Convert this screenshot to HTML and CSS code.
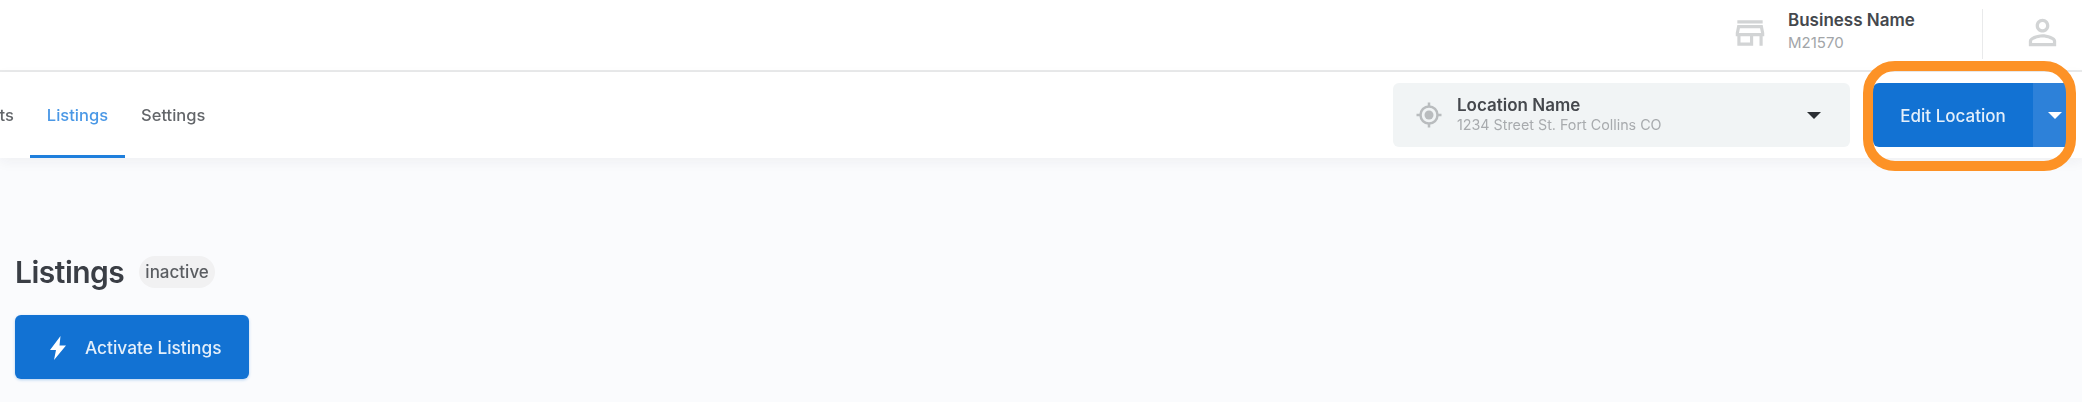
FILE: index.html
```html
<!DOCTYPE html>
<html lang="en">
<head>
<meta charset="utf-8">
<title>Listings</title>
<link rel="stylesheet" href="styles.css">
</head>
<body>
<div class="page">
  <header class="topbar">
    <svg class="store-icon" viewBox="0 0 24 24" width="38" height="38"><path d="M18.360 9l.6 3H5.040l.6-3h12.720M20 4H4v2h16V4zm0 3H4l-1 5v2h1v6h10v-6h4v6h2v-6h1v-2l-1-5zM6 18v-4h6v4H6z"/></svg>
    <div class="business">
      <div class="business-name">Business Name</div>
      <div class="business-id">M21570</div>
    </div>
    <div class="divider"></div>
    <svg class="user-icon" viewBox="0 0 24 24" width="41" height="41"><path d="M12 5.900c1.160 0 2.100.94 2.100 2.100s-.94 2.100-2.100 2.100S9.900 9.160 9.900 8s.94-2.100 2.100-2.100m0 9c2.970 0 6.100 1.460 6.100 2.100v1.100H5.900V17c0-.64 3.130-2.100 6.100-2.100M12 4C9.790 4 8 5.790 8 8s1.790 4 4 4 4-1.790 4-4-1.790-4-4-4zm0 9c-2.670 0-8 1.340-8 4v3h16v-3c0-2.660-5.330-4-8-4z"/></svg>
  </header>
  <nav class="navbar">
    <div class="tabs">
      <a class="tab tab-first">Reports</a>
      <a class="tab active">Listings</a>
      <a class="tab">Settings</a>
    </div>
    <div class="location">
      <svg class="loc-icon" viewBox="0 0 28 28" width="28" height="28"><circle class="ring" cx="14" cy="14" r="8.500"/><circle class="dot" cx="14" cy="14" r="4.500"/><path class="ring" d="M14 1.500v4M14 22.500v4M1.500 14h4M22.500 14h4"/></svg>
      <div class="loc-text">
        <div class="loc-name">Location Name</div>
        <div class="loc-addr">1234 Street St. Fort Collins CO</div>
      </div>
      <span class="caret dark"></span>
    </div>
    <div class="split-btn">
      <span class="split-main">Edit Location</span>
      <span class="split-side"><span class="caret"></span></span>
    </div>
    <div class="highlight"></div>
  </nav>
  <main class="content">
    <div class="title-row">
      <h1 class="title">Listings</h1>
      <span class="badge">inactive</span>
    </div>
    <button class="activate">
      <svg viewBox="0 0 16 24" width="16" height="24"><path d="M10.500 0 0 14h6l-2 10L16 9.500H9.500z"/></svg>
      <span>Activate Listings</span>
    </button>
  </main>
</div>
</body>
</html>
```
FILE: styles.css
```css
* { box-sizing: border-box; }
html, body { margin: 0; padding: 0; background: #fafbfd; }
body { font-family: Inter, "Liberation Sans", sans-serif; width: 2082px; height: 402px; overflow: hidden; }
.page { filter: blur(0.6px); height: 402px; }

.topbar { height: 72px; background: #fff; border-bottom: 2px solid #e9eaeb; display: flex; align-items: center; padding-right: 19px; justify-content: flex-end; }
.store-icon { fill: #d2d4d5; margin-right: 19px; margin-top: -4px; }
.business { width: 194px; display: flex; flex-direction: column; gap: 4px; margin-top: -8px; }
.business-name { font-size: 17px; font-weight: 600; color: #45484d; line-height: 20px; }
.business-id { font-size: 15px; color: #a2a5a8; line-height: 18px; }
.divider { width: 1px; height: 50px; background: #e9eaeb; margin-top: -2px; margin-right: 39px; }
.user-icon { fill: #d2d4d5; margin-top: -5px; }

.navbar { position: relative; height: 86px; background: #fff; display: flex; align-items: center; box-shadow: 0 4px 12px rgba(30, 40, 60, 0.05); }
.tabs { display: flex; height: 100%; margin-left: -64px; margin-right: auto; }
.tab { font-size: 16.500px; font-weight: 500; color: #63666a; display: flex; align-items: center; padding: 2px 16.500px 0; border-bottom: 3px solid transparent; }
.tab.active { color: #4a98e6; border-bottom-color: #1f7fdc; }

.location { width: 457px; height: 64px; background: #f1f4f5; border-radius: 6px; display: flex; align-items: center; padding: 0 29px 0 22px; margin-right: 23px; }
.loc-icon { margin-right: 14px; }
.loc-icon .ring { fill: none; stroke: #b9bcbe; stroke-width: 2.500; }
.loc-icon .dot { fill: #b9bcbe; }
.loc-text { flex: 1; }
.loc-name { font-size: 17px; font-weight: 600; color: #45484d; line-height: 20px; }
.loc-addr { font-size: 14.300px; color: #a8abae; line-height: 20px; }

.caret { display: block; width: 0; height: 0; border-left: 7px solid transparent; border-right: 7px solid transparent; border-top: 7px solid #fff; }
.caret.dark { border-top-color: #2b2e33; }

.split-btn { width: 194px; height: 64px; margin-right: 15px; display: flex; border-radius: 6px 0 0 6px; overflow: hidden; background: #1272d3; }
.split-main { flex: 1; display: flex; align-items: center; justify-content: center; padding-top: 2px; font-size: 17px; font-weight: 500; color: #e4effa; }
.split-side { width: 34px; background: #2d81d9; display: flex; align-items: center; justify-content: center; padding-left: 10px; }

.highlight { position: absolute; left: 1863px; top: -11px; width: 213px; height: 110px; border: 10px solid #fd9226; border-radius: 32px; }

.content { padding: 0 15px; }
.title-row { display: flex; align-items: center; gap: 15px; padding-top: 96px; }
.title { margin: 0; font-size: 30px; font-weight: 600; letter-spacing: -0.5px; color: #3a3e45; line-height: 36px; }
.badge { font-size: 17px; font-weight: 500; color: #5a5d61; background: #f1f1f2; border-radius: 16px; height: 32px; padding: 0 6px; display: flex; align-items: center; }
.activate { display: flex; align-items: center; gap: 19px; margin-top: 25px; width: 234px; height: 64px; padding: 1px 0 0 35px; border: 0; border-radius: 6px; background: #1272d3; color: #e4effa; font-family: inherit; font-size: 17.300px; font-weight: 500; box-shadow: 0 1px 3px rgba(18, 114, 211, 0.3); }
.activate svg { fill: #fff; flex: none; }
```
